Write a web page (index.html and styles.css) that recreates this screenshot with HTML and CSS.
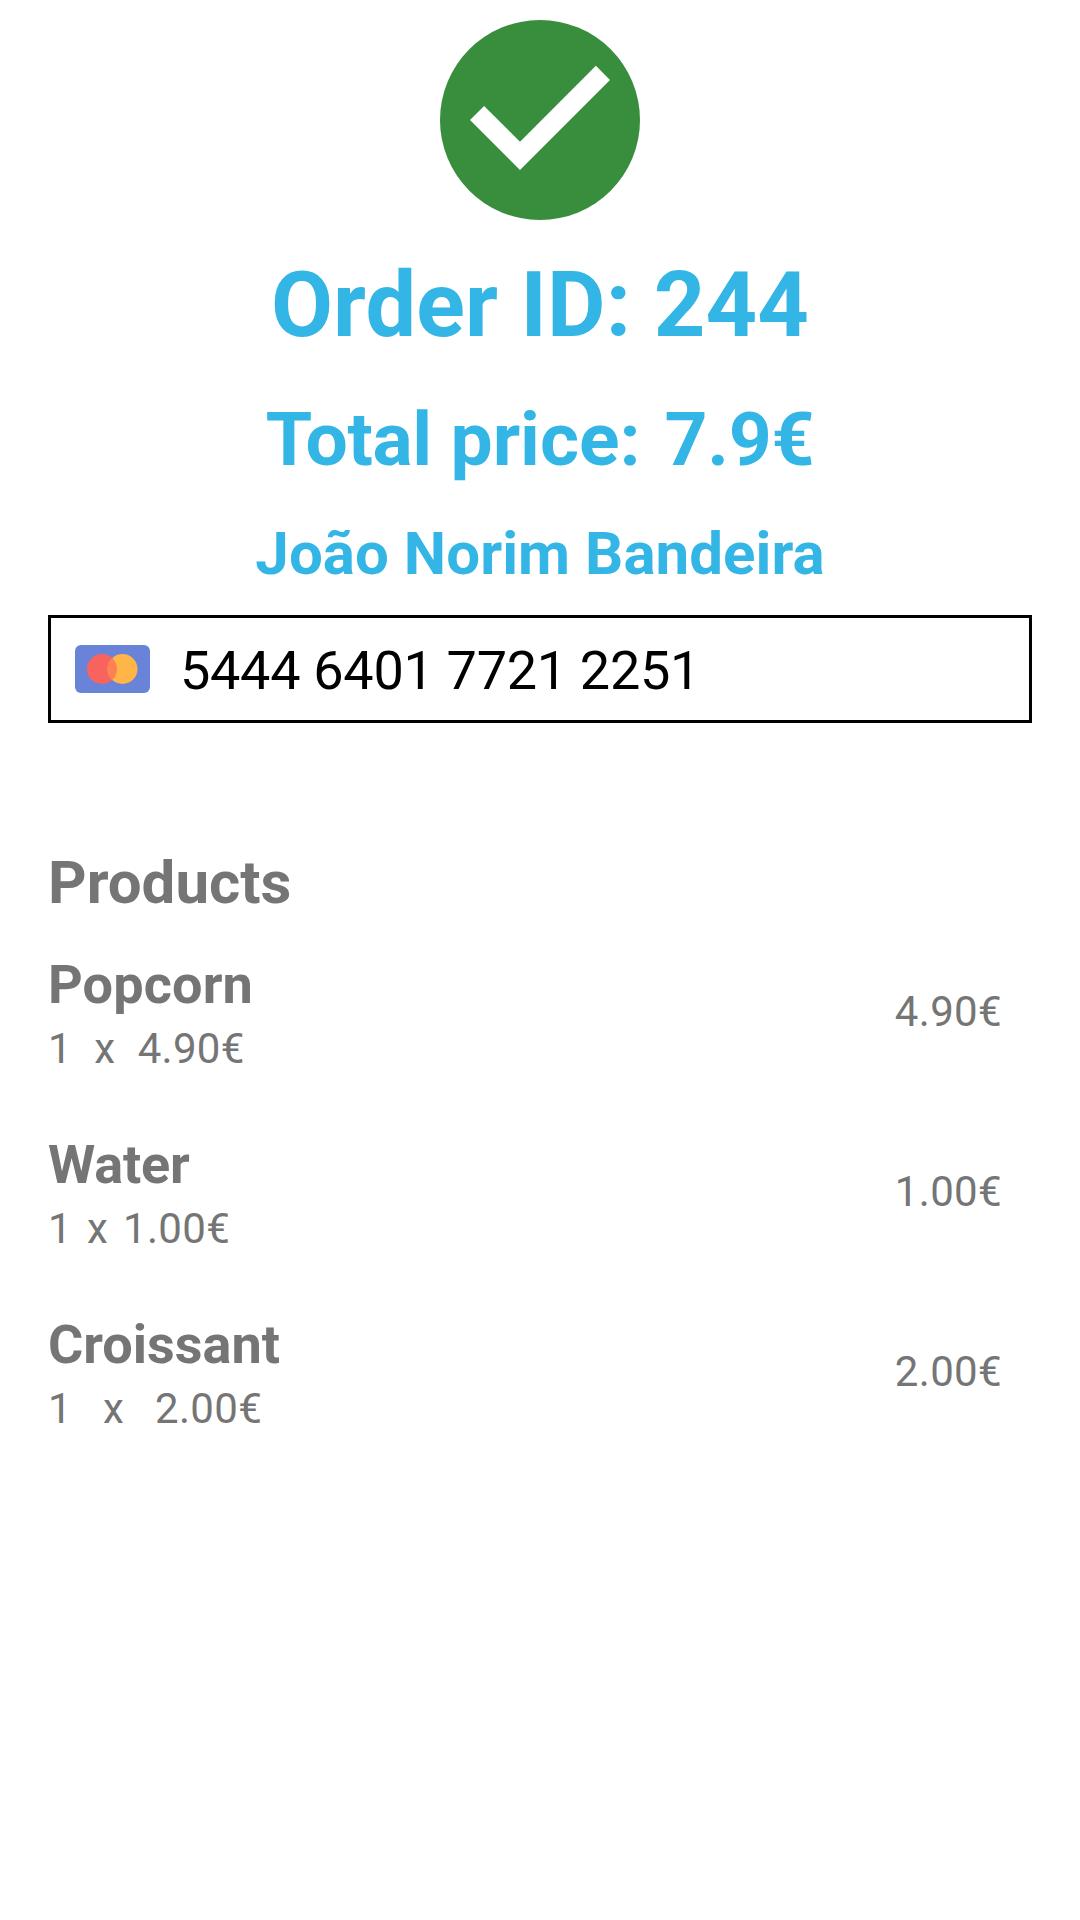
FILE: index.html
```html
<!DOCTYPE html>
<html lang="en">
<head>
<meta charset="utf-8">
<title>Order confirmation</title>
<link rel="stylesheet" href="styles.css">
</head>
<body>
<main class="screen">
  <svg class="status" viewBox="0 0 200 200" aria-hidden="true">
    <circle cx="100" cy="100" r="100" fill="#388e3c"/>
    <path d="M80 150L30 100l14.100-14.100L80 121.700l75.900-75.900L170 60z" fill="#fff"/>
  </svg>
  <h1 class="order">Order ID: 244</h1>
  <p class="total"><span class="word">Total</span> price: <span class="amount">7.9€</span></p>
  <p class="customer">João Norim Bandeira</p>
  <div class="card">
    <svg class="brand" viewBox="0 0 75 48" aria-hidden="true">
      <rect width="75" height="48" rx="6" fill="#6983d8"/>
      <circle cx="27" cy="24" r="15" fill="#f8635f"/>
      <circle cx="47.500" cy="24" r="15" fill="#ffb547"/>
      <path d="M37.250 13.050a15 15 0 0 1 0 21.900a15 15 0 0 1 0-21.900z" fill="#ff8050"/>
    </svg>
    <span class="number">5444 6401 7721 2251</span>
  </div>
  <h2 class="heading">Products</h2>
  <ul class="products">
    <li class="item">
      <div><h3 class="name loose">Popcorn</h3><p class="detail wide"><span>1</span><span>x</span><span>4.90€</span></p></div>
      <span class="price">4.90€</span>
    </li>
    <li class="item">
      <div><h3 class="name close">Water</h3><p class="detail tight"><span>1</span><span>x</span><span>1.00€</span></p></div>
      <span class="price">1.00€</span>
    </li>
    <li class="item">
      <div><h3 class="name">Croissant</h3><p class="detail wider"><span>1</span><span>x</span><span>2.00€</span></p></div>
      <span class="price">2.00€</span>
    </li>
  </ul>
</main>
</body>
</html>
```
FILE: styles.css
```css
* { box-sizing: border-box; margin: 0; padding: 0; }
body { background: #fff; font-family: Roboto, sans-serif; color: #757575; }
.screen { display: flex; flex-direction: column; height: 1920px; padding: 20px 48px 0; }
.status { width: 200px; height: 200px; align-self: center; }
.order, .total, .customer { color: #33b5e5; font-weight: 700; text-align: center; white-space: nowrap; }
.order { font-size: 90px; line-height: 106px; margin-top: 33px; letter-spacing: 0.15px; }
.total { font-size: 75px; line-height: 88px; margin-top: 36px; }
.word { letter-spacing: -0.35px; }
.amount { margin-left: 5.300px; letter-spacing: -0.3px; }
.customer { font-size: 60px; line-height: 70px; margin-top: 36px; letter-spacing: 0.05px; }
.card { display: flex; align-items: center; height: 108px; margin-top: 26px; padding-left: 23.500px; border: 3px solid #000; }
.brand { width: 75px; height: 48px; }
.number { margin: 3px 0 0 30.500px; font-size: 54px; line-height: 64px; letter-spacing: -0.3px; color: #000; white-space: nowrap; }
.heading { margin-top: 125px; font-size: 60px; line-height: 70px; font-weight: 700; }
.products { margin-top: 35px; list-style: none; }
.item { display: flex; justify-content: space-between; height: 180px; padding-right: 30px; }
.name { font-size: 54px; line-height: 64px; font-weight: 700; }
.loose { letter-spacing: 0.15px; }
.close { letter-spacing: -0.2px; }
.detail { display: flex; margin-top: 7px; font-size: 42px; line-height: 49px; letter-spacing: 0.3px; }
.wide { gap: 22.300px; }
.tight { gap: 15px; }
.wider { gap: 31px; }
.price { margin-top: 34px; font-size: 42px; line-height: 49px; letter-spacing: 0.35px; }
```
